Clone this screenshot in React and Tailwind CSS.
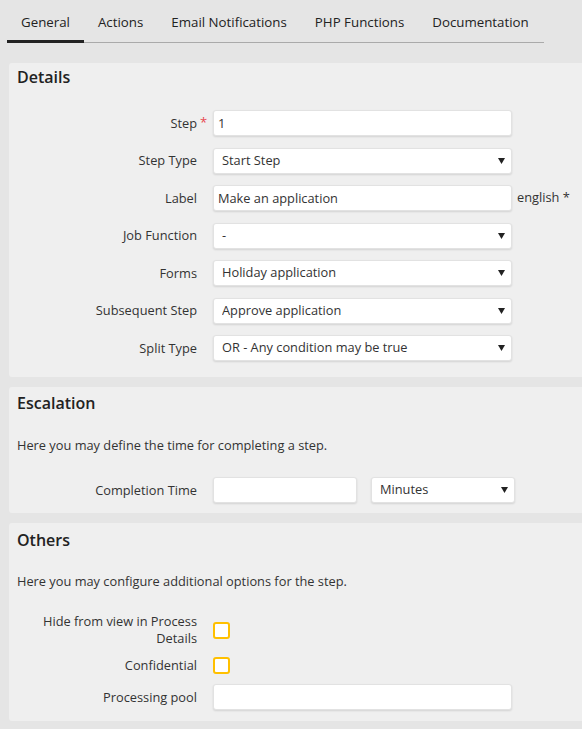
import React from "react";

const tabs = ["General", "Actions", "Email Notifications", "PHP Functions", "Documentation"];

const Arrow = () => (
  <svg
    className="pointer-events-none absolute right-[7px] top-1/2 -translate-y-1/2"
    width="7"
    height="6"
    viewBox="0 0 7 6"
  >
    <path d="M0 0 H7 L3.5 6 Z" fill="#222" />
  </svg>
);

const TextInput = ({ value = "", width = "w-[299px]" }) => (
  <input
    type="text"
    defaultValue={value}
    className={`${width} h-[26px] rounded-[3px] border border-[#e2e2e2] bg-white px-[4px] text-[12.8px] text-[#333] shadow-[0_1px_2px_rgba(0,0,0,0.12)] outline-none`}
  />
);

const Select = ({ value, width = "w-[299px]" }) => (
  <div className={`relative ${width} h-[26px]`}>
    <select
      defaultValue={value}
      className="h-full w-full appearance-none rounded-[3px] border border-[#e2e2e2] bg-white pl-[8px] pr-6 text-[12.8px] text-[#333] shadow-[0_1px_2px_rgba(0,0,0,0.12)] outline-none"
    >
      <option>{value}</option>
    </select>
    <Arrow />
  </div>
);

const Row = ({ label, required, children }) => (
  <div className="flex items-center">
    <div className="relative w-[180px] shrink-0 text-right leading-[17px] text-[#333]">
      {label}
      {required && (
        <span className="absolute left-[183px] top-[-1px] text-[13px] text-[#e8474f]">*</span>
      )}
    </div>
    <div className="ml-[16px] flex items-center">{children}</div>
  </div>
);

const Checkbox = () => (
  <div className="h-[17px] w-[17px] rounded-[3px] border-2 border-[#ffc000] bg-white" />
);

const Panel = ({ title, children, className = "" }) => (
  <div className={`ml-[9px] rounded-l-[3px] bg-[#efefef] pl-[8px] ${className}`}>
    <h2 className="text-[16px] font-semibold leading-[22px] text-[#222]">{title}</h2>
    {children}
  </div>
);

export default function App() {
  return (
    <div
      className="min-h-screen bg-[#e5e5e5] pb-[9px] text-[12.8px] text-[#333]"
      style={{ fontFamily: '"Open Sans", "Liberation Sans", sans-serif' }}
    >
      <div className="ml-[7px] flex w-[537px] shadow-[inset_0_-1px_0_#aaaaaa]">
        {tabs.map((t, i) => (
          <div
            key={t}
            className={`border-b-[3px] px-[14px] pb-[9px] pt-[13px] text-[13.3px] leading-[18px] text-[#222] ${
              i === 0 ? "border-[#222]" : "border-transparent"
            }`}
          >
            {t}
          </div>
        ))}
      </div>

      <Panel title="Details" className="mt-[20px] pb-[16px] pt-[3px]">
        <div className="mt-[22px] flex flex-col gap-[11.5px]">
          <Row label="Step" required>
            <TextInput value="1" />
          </Row>
          <Row label="Step Type">
            <Select value="Start Step" />
          </Row>
          <Row label="Label">
            <TextInput value="Make an application" />
            <span className="ml-[5px] whitespace-nowrap text-[#333]">english *</span>
          </Row>
          <Row label="Job Function">
            <Select value="-" />
          </Row>
          <Row label="Forms">
            <Select value="Holiday application" />
          </Row>
          <Row label="Subsequent Step">
            <Select value="Approve application" />
          </Row>
          <Row label="Split Type">
            <Select value="OR - Any condition may be true" />
          </Row>
        </div>
      </Panel>

      <Panel title="Escalation" className="mt-[10px] pb-[10px] pt-[5px]">
        <p className="mt-[22px] leading-[18px]">Here you may define the time for completing a step.</p>
        <div className="mt-[23px]">
          <Row label="Completion Time">
            <TextInput width="w-[144px]" />
            <div className="ml-[14px]">
              <Select value="Minutes" width="w-[144px]" />
            </div>
          </Row>
        </div>
      </Panel>

      <Panel title="Others" className="mt-[10px] pb-[11px] pt-[6px]">
        <p className="mt-[21px] leading-[18px]">Here you may configure additional options for the step.</p>
        <div className="mt-[23px] flex flex-col gap-[10px]">
          <Row label="Hide from view in Process Details">
            <Checkbox />
          </Row>
          <Row label="Confidential">
            <Checkbox />
          </Row>
          <Row label="Processing pool">
            <TextInput />
          </Row>
        </div>
      </Panel>
    </div>
  );
}
